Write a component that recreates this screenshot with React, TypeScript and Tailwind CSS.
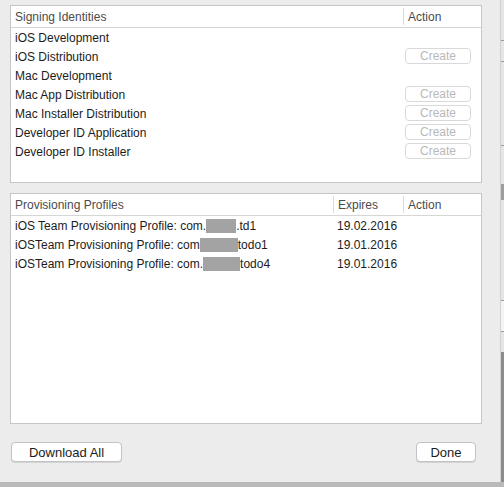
const identities = [
  { name: "iOS Development", create: false },
  { name: "iOS Distribution", create: true },
  { name: "Mac Development", create: false },
  { name: "Mac App Distribution", create: true },
  { name: "Mac Installer Distribution", create: true },
  { name: "Developer ID Application", create: true },
  { name: "Developer ID Installer", create: true },
];

const profiles = [
  { pre: "iOS Team Provisioning Profile: com.", blur: "w-[30px]", post: ".td1", expires: "19.02.2016" },
  { pre: "iOSTeam Provisioning Profile: com", blur: "w-[38px]", post: "todo1", expires: "19.01.2016" },
  { pre: "iOSTeam Provisioning Profile: com.", blur: "w-[37px]", post: "todo4", expires: "19.01.2016" },
];

function Divider() {
  return <span className="h-[17px] border-l border-[#dcdcdc]"></span>;
}

export default function App() {
  return (
    <div
      className="flex w-[504px] h-[487px] bg-[#b9b9b9] overflow-hidden text-[12px]"
      style={{ fontFamily: '"Liberation Sans", Arial, sans-serif' }}
    >
      <div className="flex flex-col w-[500px] h-[482px] bg-[#ececec] pl-[10px] pt-[5px]">
        {/* signing identities */}
        <div className="flex flex-col w-[472px] h-[178px] bg-white border border-[#c6c6c6]">
          <div className="flex items-center h-[22px] border-b border-[#d6d6d6] text-[#4b4b4b]">
            <span className="flex-1 pl-[4px]">Signing Identities</span>
            <Divider />
            <span className="w-[77px] pl-[4px]">Action</span>
          </div>
          {identities.map((r) => (
            <div key={r.name} className="flex items-center h-[19px] text-[#1c1c1c]">
              <span className="flex-1 pl-[4px]">{r.name}</span>
              <span className="w-[78px] pl-[2px] flex">
                {r.create && (
                  <span className="w-[66px] h-[16px] mt-[-1px] flex items-center justify-center rounded-[4px] border border-[#d9d9d9] text-[#b9b9b9] text-[12px]">
                    Create
                  </span>
                )}
              </span>
            </div>
          ))}
        </div>

        {/* provisioning profiles */}
        <div className="flex flex-col w-[472px] h-[231px] mt-[10px] bg-white border border-[#c6c6c6]">
          <div className="flex items-center h-[22px] border-b border-[#d6d6d6] text-[#4b4b4b]">
            <span className="flex-1 pl-[4px]">Provisioning Profiles</span>
            <Divider />
            <span className="w-[69px] pl-[4px]">Expires</span>
            <Divider />
            <span className="w-[77px] pl-[4px]">Action</span>
          </div>
          {profiles.map((p) => (
            <div key={p.post} className="flex items-center h-[19px] text-[#1c1c1c]">
              <span className="flex-1 pl-[4px] flex items-center whitespace-nowrap">
                {p.pre}
                <span className={`${p.blur} h-[14px] bg-[#a3a3a3]`}></span>
                {p.post}
              </span>
              <span className="w-[70px] pl-[4px]">{p.expires}</span>
              <span className="w-[78px]"></span>
            </div>
          ))}
        </div>

        <div className="flex justify-between w-[466px] mt-[18px] pl-[1px]">
          <button className="w-[111px] h-[20px] bg-white border border-[#c3c3c3] rounded-[4px] text-[#1c1c1c] text-[13px] shadow-[0_1px_0_#d4d4d4]">
            Download All
          </button>
          <button className="w-[60px] h-[20px] bg-white border border-[#c3c3c3] rounded-[4px] text-[#1c1c1c] text-[13px] shadow-[0_1px_0_#d4d4d4]">
            Done
          </button>
        </div>
      </div>

      {/* window behind */}
      <div className="flex flex-col w-[4px] h-[482px] bg-[#e6e6e6] border-l border-[#d0d0d0]">
        <span className="h-[40px]"></span>
        <span className="h-[1px] bg-[#9a9a9a]"></span>
        <span className="h-[20px]"></span>
        <span className="h-[1px] bg-[#9a9a9a]"></span>
        <span className="h-[83px]"></span>
        <span className="h-[1px] bg-[#9a9a9a]"></span>
        <span className="h-[38px]"></span>
        <span className="h-[16px] bg-[#9d9d9d]"></span>
        <span className="h-[100px]"></span>
        <span className="h-[1px] bg-[#9a9a9a]"></span>
        <span className="h-[30px] bg-[#f4f4f4]"></span>
        <span className="h-[1px] bg-[#9a9a9a]"></span>
        <span className="h-[20px]"></span>
        <span className="flex-1 bg-[#8c8c8c]"></span>
      </div>
    </div>
  );
}
